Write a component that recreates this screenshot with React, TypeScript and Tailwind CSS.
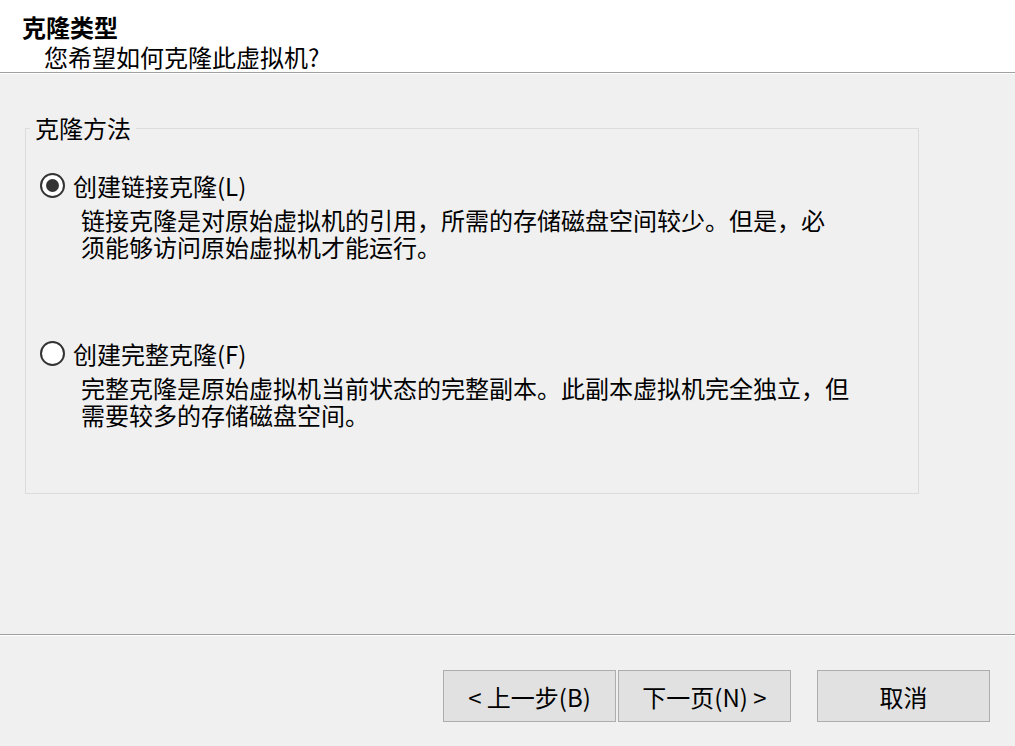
import React from "react";

const font = { fontFamily: '"Noto Sans CJK SC", "Noto Sans", sans-serif' };

function Radio({ checked }: { checked: boolean }) {
  return (
    <span className="flex h-[25px] w-[25px] shrink-0 items-center justify-center rounded-full border-2 border-[#333333] bg-white">
      {checked && <span className="h-[13px] w-[13px] rounded-full bg-[#333333]" />}
    </span>
  );
}

function Option({
  checked,
  label,
  lines,
}: {
  checked: boolean;
  label: string;
  lines: string[];
}) {
  return (
    <div className="flex flex-col">
      <div className="flex h-[27px] items-center pl-[14px]">
        <Radio checked={checked} />
        <span className="ml-[8px] leading-[27px] whitespace-nowrap">{label}</span>
      </div>
      <div className="mt-[7px] pl-[55px]">
        {lines.map((l) => (
          <div key={l} className="leading-[27px] whitespace-nowrap">
            {l}
          </div>
        ))}
      </div>
    </div>
  );
}

function Btn({ children }: { children: React.ReactNode }) {
  return (
    <button className="flex h-[52px] w-[173px] items-center justify-center border border-[#adadad] bg-[#e1e1e1] text-[24px] leading-[27px] text-black whitespace-nowrap">
      {children}
    </button>
  );
}

export default function App() {
  return (
    <div
      className="flex h-[746px] w-[1015px] flex-col overflow-hidden bg-[#f0f0f0] text-[24px] text-black"
      style={font}
    >
      <div className="h-[72px] shrink-0 bg-white pl-[22px] pt-[12px]">
        <div className="font-bold leading-[30px]">克隆类型</div>
        <div className="pl-[22px] leading-[30px]">您希望如何克隆此虚拟机?</div>
      </div>
      <div className="h-px shrink-0 bg-[#a0a0a0]" />
      <div className="h-px shrink-0 bg-white" />
      <div className="flex-1">
        <div className="relative ml-[25px] mt-[54px] h-[366px] w-[894px] border border-[#dcdcdc]">
          <span className="absolute -top-[13px] left-[4px] bg-[#f0f0f0] px-[5px] leading-[24px]">
            克隆方法
          </span>
          <div className="pt-[43px]">
            <Option
              checked
              label="创建链接克隆(L)"
              lines={[
                "链接克隆是对原始虚拟机的引用，所需的存储磁盘空间较少。但是，必",
                "须能够访问原始虚拟机才能运行。",
              ]}
            />
            <div className="h-[80px]" />
            <Option
              checked={false}
              label="创建完整克隆(F)"
              lines={[
                "完整克隆是原始虚拟机当前状态的完整副本。此副本虚拟机完全独立，但",
                "需要较多的存储磁盘空间。",
              ]}
            />
          </div>
        </div>
      </div>
      <div className="h-px shrink-0 bg-[#a0a0a0]" />
      <div className="h-px shrink-0 bg-white" />
      <div className="flex h-[110px] shrink-0 items-start justify-end pr-[25px] pt-[34px]">
        <Btn>&lt; 上一步(B)</Btn>
        <div className="w-[2px]" />
        <Btn>下一页(N) &gt;</Btn>
        <div className="w-[26px]" />
        <Btn>取消</Btn>
      </div>
    </div>
  );
}
